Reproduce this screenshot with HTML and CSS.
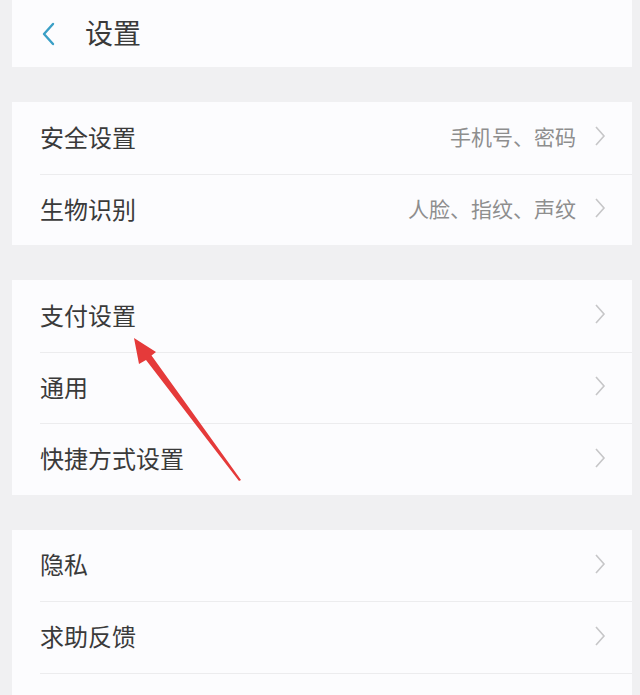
FILE: index.html
```html
<!DOCTYPE html>
<html lang="zh-CN">
<head>
    <meta charset="UTF-8">
    <meta name="viewport" content="width=device-width, initial-scale=1.0">
    <title>设置</title>
    <link rel="stylesheet" href="styles.css">
</head>
<body>
    <div class="page">
        <div class="header">
            <svg class="back" width="16" height="24" viewBox="0 0 16 24">
                <polyline points="12,2 3,12 12,22" fill="none" stroke="#3a9fc6" stroke-width="2.4" stroke-linecap="round" stroke-linejoin="round"/>
            </svg>
            <span class="title">设置</span>
        </div>

        <div class="group">
            <div class="row">
                <span class="label">安全设置</span>
                <span class="value">手机号、密码</span>
                <svg class="chevron" width="12" height="22" viewBox="0 0 12 22"><polyline points="2,2 10,11 2,20"/></svg>
            </div>
            <div class="row">
                <span class="label">生物识别</span>
                <span class="value">人脸、指纹、声纹</span>
                <svg class="chevron" width="12" height="22" viewBox="0 0 12 22"><polyline points="2,2 10,11 2,20"/></svg>
            </div>
        </div>

        <div class="group">
            <div class="row">
                <span class="label">支付设置</span>
                <svg class="chevron" width="12" height="22" viewBox="0 0 12 22"><polyline points="2,2 10,11 2,20"/></svg>
            </div>
            <div class="row">
                <span class="label">通用</span>
                <svg class="chevron" width="12" height="22" viewBox="0 0 12 22"><polyline points="2,2 10,11 2,20"/></svg>
            </div>
            <div class="row">
                <span class="label">快捷方式设置</span>
                <svg class="chevron" width="12" height="22" viewBox="0 0 12 22"><polyline points="2,2 10,11 2,20"/></svg>
            </div>
        </div>

        <div class="group">
            <div class="row">
                <span class="label">隐私</span>
                <svg class="chevron" width="12" height="22" viewBox="0 0 12 22"><polyline points="2,2 10,11 2,20"/></svg>
            </div>
            <div class="row">
                <span class="label">求助反馈</span>
                <svg class="chevron" width="12" height="22" viewBox="0 0 12 22"><polyline points="2,2 10,11 2,20"/></svg>
            </div>
            <div class="row"></div>
        </div>

        <!-- 标注箭头 -->
        <svg class="arrow" width="640" height="695" viewBox="0 0 640 695">
            <polygon points="134,338 156,352 151.5,355.5 241,480 239,481 146,360 139,364" fill="#e53a3a"/>
        </svg>
    </div>
</body>
</html>
```

FILE: styles.css
```css
* {
    box-sizing: border-box;
}

body {
    margin: 0;
    background-color: #f0f0f2;
    font-family: "Noto Sans CJK SC", "Noto Sans", sans-serif;
    color: #363636;
    height: 695px;
    overflow: hidden;
}

.page {
    position: relative;
    padding: 0 8px 0 12px;
}

.header {
    display: flex;
    align-items: center;
    height: 67px;
    background: #fcfcfe;
    margin-bottom: 35px;
}

.back {
    margin-left: 29px;
    margin-right: 28px;
}

.title {
    font-size: 28px;
    color: #3a3a3a;
    padding-bottom: 3px;
}

.group {
    background: #fcfcfe;
    margin-bottom: 35px;
}

.row {
    display: flex;
    align-items: center;
    height: 71.5px;
    padding: 0 26px 3px 28px;
}

.row + .row {
    border-top: 1px solid #ececee;
    margin-left: 28px;
    padding-left: 0;
}

.label {
    flex: 1;
    font-size: 24px;
    color: #3a3a3a;
}

.value {
    font-size: 21px;
    color: #8e8e8e;
    margin-right: 18px;
}

.chevron polyline {
    fill: none;
    stroke: #c6c6c8;
    stroke-width: 1.6;
}

.arrow {
    position: absolute;
    left: 0;
    top: 0;
    pointer-events: none;
}
```
